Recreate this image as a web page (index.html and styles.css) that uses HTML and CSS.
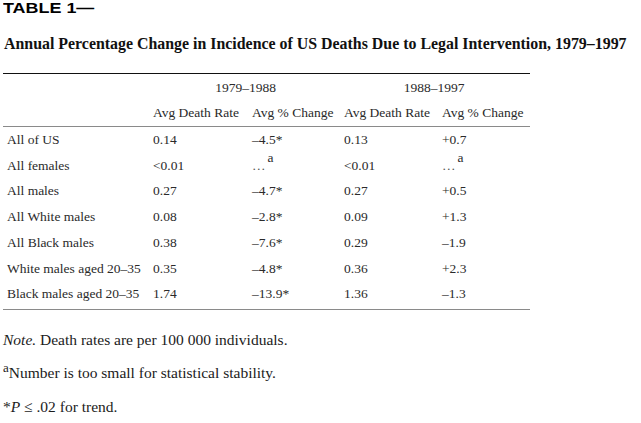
FILE: index.html
```html
<!DOCTYPE html>
<html>
<head>
<meta charset="utf-8">
<link rel="stylesheet" href="styles.css">
</head>
<body>
<div class="label"><span class="label-text">TABLE 1—</span></div>
<h1 class="title">Annual Percentage Change in Incidence of US Deaths Due to Legal Intervention, 1979–1997</h1>
<table class="data">
  <colgroup>
    <col class="c1"><col class="c2"><col class="c3"><col class="c4"><col class="c5">
  </colgroup>
  <thead>
    <tr class="span-row">
      <th></th>
      <th colspan="2" class="span">1979–1988</th>
      <th colspan="2" class="span">1988–1997</th>
    </tr>
    <tr class="head-row">
      <th></th>
      <th>Avg Death Rate</th>
      <th>Avg % Change</th>
      <th>Avg Death Rate</th>
      <th>Avg % Change</th>
    </tr>
  </thead>
  <tbody>
    <tr><td>All of US</td><td>0.14</td><td>–4.5*</td><td>0.13</td><td>+0.7</td></tr>
    <tr><td>All females</td><td>&lt;0.01</td><td><span class="dots">…</span><span class="sup">a</span></td><td>&lt;0.01</td><td><span class="dots">…</span><span class="sup">a</span></td></tr>
    <tr><td>All males</td><td>0.27</td><td>–4.7*</td><td>0.27</td><td>+0.5</td></tr>
    <tr><td>All White males</td><td>0.08</td><td>–2.8*</td><td>0.09</td><td>+1.3</td></tr>
    <tr><td>All Black males</td><td>0.38</td><td>–7.6*</td><td>0.29</td><td>–1.9</td></tr>
    <tr><td>White males aged 20–35</td><td>0.35</td><td>–4.8*</td><td>0.36</td><td>+2.3</td></tr>
    <tr class="last"><td>Black males aged 20–35</td><td>1.74</td><td>–13.9*</td><td>1.36</td><td>–1.3</td></tr>
  </tbody>
</table>
<p class="note n1"><em>Note.</em> Death rates are per 100 000 individuals.</p>
<p class="note n2"><span class="fsup">a</span>Number is too small for statistical stability.</p>
<p class="note n3">*<em>P</em> ≤ .02 for trend.</p>
</body>
</html>
```
FILE: styles.css
```css
html, body {
  margin: 0;
  background: #ffffff;
}
body {
  padding: 0 3px;
  color: #1b1b1b;
  font-family: "Liberation Serif", "Times New Roman", serif;
}
.label {
  height: 16px;
  line-height: 16px;
  font-family: "Liberation Sans", Arial, sans-serif;
  font-weight: bold;
  font-size: 14px;
  color: #000;
}
.label-text {
  display: inline-block;
  transform: scaleX(1.28);
  transform-origin: left center;
}
.title {
  margin: 19px 0 0 1px;
  font-size: 15.9px;
  line-height: 18px;
  font-weight: bold;
  color: #111;
}
.data {
  margin-top: 20px;
  width: 527px;
  table-layout: fixed;
  border-collapse: collapse;
  border-top: 1px solid #111;
  border-bottom: 1px solid #8a8a8a;
  font-size: 13.5px;
  line-height: 15.75px;
  color: #2a2a2a;
}
.c1 { width: 150px; }
.c2 { width: 99px; }
.c3 { width: 92px; }
.c4 { width: 98px; }
.c5 { width: 88px; }
.data th {
  font-weight: normal;
  text-align: left;
  padding: 0;
  white-space: nowrap;
}
.span-row th {
  padding: 5.5px 0 4.65px;
}
.span-row .span {
  text-align: center;
  padding-right: 6px;
}
.head-row th {
  padding: 4.65px 0 5.7px;
  border-bottom: 1px solid #8a8a8a;
}
.data td {
  padding: 5px 0;
  white-space: nowrap;
}
.data td:first-child {
  padding-left: 4px;
}
.data tr.last td {
  padding-bottom: 6.5px;
}
.dots {
  color: #555;
}
.sup {
  vertical-align: 8px;
  line-height: 0;
  margin-left: 2px;
}
.note {
  margin: 0;
  font-size: 15.5px;
  line-height: 18px;
  color: #1b1b1b;
}
.n1 { margin-top: 21px; }
.n2 { margin-top: 15.7px; }
.n3 { margin-top: 16px; }
.fsup {
  font-size: 13px;
  vertical-align: 6px;
  line-height: 0;
}
```
